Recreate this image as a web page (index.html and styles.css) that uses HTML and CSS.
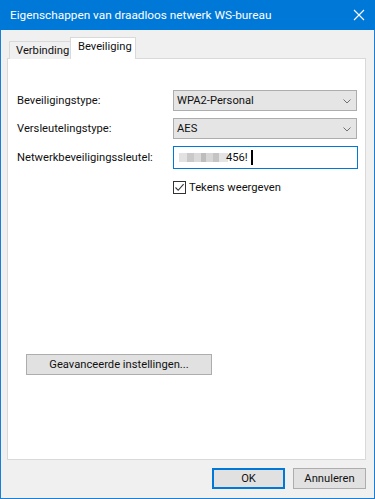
FILE: index.html
```html
<!DOCTYPE html>
<html lang="nl">
<head>
    <meta charset="UTF-8">
    <meta name="viewport" content="width=device-width, initial-scale=1.0">
    <title>Eigenschappen van draadloos netwerk WS-bureau</title>
    <link rel="stylesheet" href="styles.css">
</head>
<body>
    <div class="window">
        <div class="titlebar">
            <span class="title">Eigenschappen van draadloos netwerk WS-bureau</span>
            <svg class="close" width="12" height="12" viewBox="0 0 12 12">
                <path d="M1 1 L11 11 M11 1 L1 11" stroke="#fff" stroke-width="1.1" fill="none"/>
            </svg>
        </div>

        <div class="client">
            <div class="tabs">
                <div class="tab">Verbinding</div>
                <div class="tab active">Beveiliging</div>
            </div>

            <div class="panel">
                <div class="form">
                    <label>Beveiligingstype:</label>
                    <div class="select">
                        <span>WPA2-Personal</span>
                        <svg class="chevron" width="8" height="5" viewBox="0 0 8 5">
                            <path d="M0.5 0.5 L4 4 L7.5 0.5" stroke="#707070" fill="none"/>
                        </svg>
                    </div>

                    <label>Versleutelingstype:</label>
                    <div class="select">
                        <span>AES</span>
                        <svg class="chevron" width="8" height="5" viewBox="0 0 8 5">
                            <path d="M0.5 0.5 L4 4 L7.5 0.5" stroke="#707070" fill="none"/>
                        </svg>
                    </div>

                    <label>Netwerkbeveiligingssleutel:</label>
                    <div class="textbox">
                        <span class="blurred"></span>
                        <span>456!</span>
                        <span class="caret"></span>
                    </div>

                    <div></div>
                    <div class="check">
                        <span class="box">
                            <svg width="11" height="11" viewBox="0 0 11 11">
                                <path d="M1.5 5.5 L4.2 8.3 L9.6 2.2" stroke="#333" stroke-width="1.1" fill="none"/>
                            </svg>
                        </span>
                        <span>Tekens weergeven</span>
                    </div>
                </div>

                <button class="btn btn-advanced">Geavanceerde instellingen...</button>
            </div>

            <div class="footer">
                <button class="btn btn-default">OK</button>
                <button class="btn">Annuleren</button>
            </div>
        </div>
    </div>
</body>
</html>
```

FILE: styles.css
```css
* {
    box-sizing: border-box;
}

body {
    margin: 0;
    font-family: Roboto, "Noto Sans", sans-serif;
    font-size: 11.2px;
    color: #111;
    background-color: #f0f0f0;
}

.window {
    width: 375px;
    height: 499px;
    border: 1px solid #1a7fd4;
    border-top: none;
    display: flex;
    flex-direction: column;
}

.titlebar {
    height: 30px;
    background-color: #0078d7;
    color: #fff;
    display: flex;
    align-items: center;
    justify-content: space-between;
    padding: 0 9px 0 10px;
    margin: 0 -1px;
}

.title {
    font-size: 11.8px;
}

.close {
    margin-right: 1px;
}

.client {
    flex: 1;
    padding: 8px 8px 0 6px;
    display: flex;
    flex-direction: column;
}

.tabs {
    display: flex;
    align-items: flex-end;
    height: 21px;
    padding-left: 2px;
    position: relative;
    z-index: 1;
}

.tab {
    height: 18px;
    width: 62px;
    padding-left: 6px;
    border: 1px solid #d9d9d9;
    border-bottom: none;
    background-color: #f0f0f0;
    line-height: 18px;
}

.tab.active {
    height: 22px;
    width: 66px;
    margin: 0 -2px 0 -1px;
    padding-left: 7px;
    background-color: #fff;
    line-height: 18px;
}

.panel {
    height: 402px;
    margin-top: -1px;
    background-color: #fff;
    border: 1px solid #d9d9d9;
    padding: 31px 8px 0 9px;
    display: flex;
    flex-direction: column;
}

.form {
    display: grid;
    grid-template-columns: 156px 184px;
    row-gap: 7px;
    align-items: center;
}

.select {
    height: 21px;
    background-color: #e5e5e5;
    border: 1px solid #adadad;
    display: flex;
    align-items: center;
    justify-content: space-between;
    padding: 0 5px 0 3px;
}

.chevron {
    margin-top: 1px;
}

.textbox {
    height: 23px;
    width: 185px;
    border: 1px solid #0078d7;
    display: flex;
    align-items: center;
    padding-left: 5px;
}

.blurred {
    width: 49px;
    height: 9px;
    margin-right: -2px;
    background: linear-gradient(90deg, #e2e2e2 0 8px, #c9c9c9 8px 15px, #dadada 15px 22px, #bdbdbd 22px 27px, #d6d6d6 27px 34px, #c4c4c4 34px 40px, #e4e4e4 40px 49px);
}

.caret {
    width: 2px;
    height: 15px;
    background-color: #000;
    margin-left: 3px;
}

.check {
    display: flex;
    align-items: center;
    gap: 3px;
    margin-top: 5px;
}

.box {
    width: 13px;
    height: 13px;
    border: 1px solid #333;
    background-color: #fff;
    display: flex;
    align-items: center;
    justify-content: center;
}

.btn {
    font-family: inherit;
    font-size: 11.2px;
    color: #111;
    height: 21px;
    background-color: #e1e1e1;
    border: 1px solid #adadad;
    padding: 0;
}

.btn-advanced {
    width: 186px;
    margin-top: auto;
    margin-bottom: 84px;
    margin-left: 9px;
}

.footer {
    display: flex;
    justify-content: flex-end;
    gap: 8px;
    padding-top: 8px;
}

.footer .btn {
    flex: none;
    width: 73px;
}

.btn-default {
    border: 2px solid #0078d7;
}
```
